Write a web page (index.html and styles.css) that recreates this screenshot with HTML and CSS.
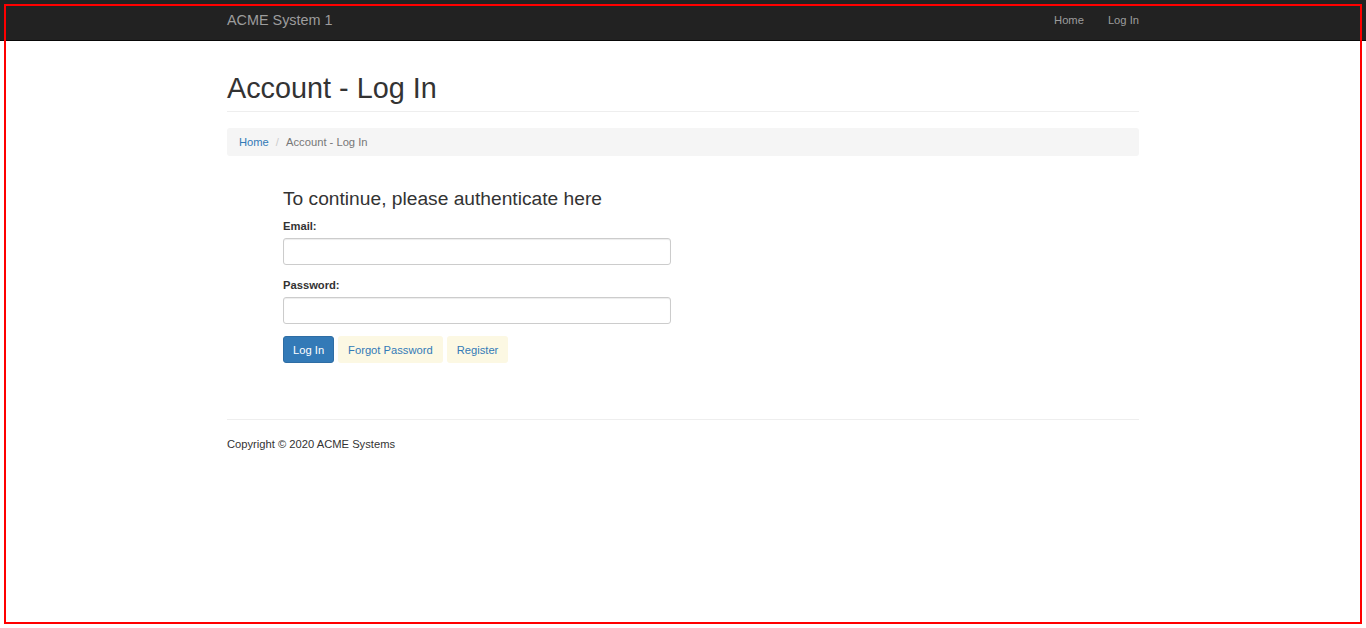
FILE: index.html
```html
<!DOCTYPE html>
<html lang="en">
<head>
<meta charset="utf-8">
<title>Account - Log In</title>
<link rel="stylesheet" href="styles.css">
</head>
<body>
<nav class="navbar">
  <div class="container navbar-inner">
    <a class="navbar-brand" href="#">ACME System 1</a>
    <ul class="nav-links">
      <li><a href="#">Home</a></li>
      <li><a href="#">Log In</a></li>
    </ul>
  </div>
</nav>
<main class="container body-content">
  <div class="page-header">
    <h1>Account - Log In</h1>
  </div>
  <ol class="breadcrumb">
    <li><a href="#">Home</a></li>
    <li class="active">Account - Log In</li>
  </ol>
  <form class="login-form">
    <h3>To continue, please authenticate here</h3>
    <div class="form-group">
      <label for="email">Email:</label>
      <input id="email" type="text" class="form-control">
    </div>
    <div class="form-group">
      <label for="password">Password:</label>
      <input id="password" type="password" class="form-control">
    </div>
    <div class="btn-row">
      <button type="button" class="btn btn-primary">Log In</button>
      <a href="#" class="btn btn-light">Forgot Password</a>
      <a href="#" class="btn btn-light">Register</a>
    </div>
  </form>
  <hr class="footer-rule">
  <footer class="footer">
    <p>Copyright &copy; 2020 ACME Systems</p>
  </footer>
</main>
<div class="frame-overlay"></div>
</body>
</html>
```
FILE: styles.css
```css
* { box-sizing: border-box; }
html, body { margin: 0; padding: 0; }
body {
  font-family: "Liberation Sans", Arial, Helvetica, sans-serif;
  font-size: 11.2px;
  line-height: 16px;
  color: #333;
  background: #fff;
  padding-top: 41px;
}
a { color: #337ab7; text-decoration: none; }

.container { width: 912px; margin: 0 auto; }

.navbar {
  position: fixed;
  top: 0; left: 0; right: 0;
  height: 41px;
  background: #222;
  border-bottom: 1px solid #080808;
}
.navbar-inner { display: flex; justify-content: space-between; align-items: flex-start; }
.navbar-brand {
  color: #9d9d9d;
  font-size: 14.4px;
  line-height: 16px;
  padding: 12px 0;
  height: 40px;
}
.nav-links { list-style: none; margin: 0 -12px 0 0; padding: 0; display: flex; }
.nav-links a {
  display: block;
  color: #9d9d9d;
  padding: 12px 12px;
  line-height: 16px;
}

.page-header {
  margin: 32px 0 16px;
  padding-bottom: 6px;
  border-bottom: 1px solid #eee;
}
.page-header h1 {
  margin: 0;
  font-size: 28.8px;
  line-height: 31.68px;
  font-weight: 500;
}

.breadcrumb {
  list-style: none;
  margin: 0 0 16px;
  padding: 6px 12px;
  background: #f5f5f5;
  border-radius: 3px;
  display: flex;
  height: 28px;
}
.breadcrumb li + li::before {
  content: "/\00a0";
  padding: 0 4px 0 7px;
  color: #ccc;
}
.breadcrumb .active { color: #777; }

.login-form { padding-left: 56px; padding-top: 16px; }
.login-form h3 {
  margin: 0 0 9px;
  font-size: 19.2px;
  line-height: 21px;
  font-weight: 500;
}
.form-group { margin-bottom: 12px; }
.form-group label {
  display: block;
  font-weight: bold;
  margin-bottom: 4px;
}
.form-control {
  display: block;
  width: 388px;
  height: 27px;
  padding: 4px 10px;
  font: inherit;
  color: #555;
  border: 1px solid #ccc;
  border-radius: 3px;
  box-shadow: inset 0 1px 1px rgba(0,0,0,.075);
  background: #fff;
}
.btn-row { display: flex; gap: 4px; }
.btn {
  display: inline-block;
  font: inherit;
  line-height: 16px;
  padding: 5px 9px;
  height: 27px;
  border: 1px solid transparent;
  border-radius: 3px;
  cursor: pointer;
}
.btn-primary { background: #337ab7; border-color: #2e6da4; color: #fff; }
.btn-light { background: #fcf8e3; color: #337ab7; }

.footer-rule {
  margin: 56px 0 16px;
  border: 0;
  border-top: 1px solid #eee;
}
.footer p { margin: 0 0 8px; }

.frame-overlay {
  position: fixed;
  left: 4px; top: 4px;
  width: 1358px; height: 620px;
  border: 2px solid #f00;
  pointer-events: none;
}
```
